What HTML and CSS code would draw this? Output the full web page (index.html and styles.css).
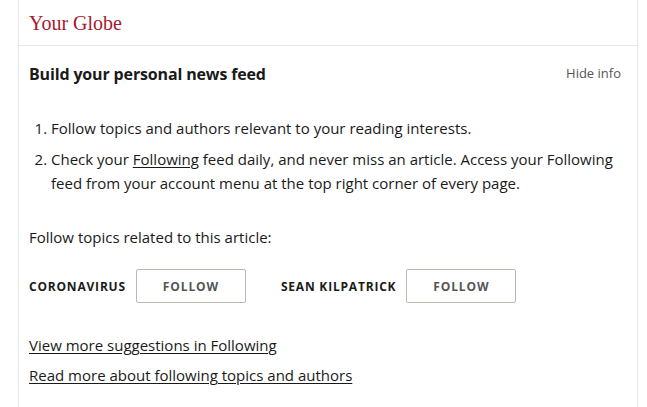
FILE: index.html
```html
<!DOCTYPE html>
<html>
<head>
<meta charset="utf-8">
<link rel="stylesheet" href="styles.css">
</head>
<body>
<div class="card">
  <div class="card-head">
    <h2 class="brand">Your Globe</h2>
  </div>
  <div class="card-body">
    <div class="title-row">
      <h3 class="title">Build your personal news feed</h3>
      <a class="hide">Hide info</a>
    </div>
    <ol class="steps">
      <li>Follow topics and authors relevant to your reading interests.</li>
      <li><span>Check your </span><a class="ul">Following</a><span> feed daily, and never miss an article. Access your Following</span><br><span>feed from your account menu at the top right corner of every page.</span></li>
    </ol>
    <p class="related">Follow topics related to this article:</p>
    <div class="topics">
      <div class="topic"><span class="topic-name">CORONAVIRUS</span><button class="follow">FOLLOW</button></div>
      <div class="topic"><span class="topic-name">SEAN KILPATRICK</span><button class="follow">FOLLOW</button></div>
    </div>
    <div class="links">
      <a class="ul">View more suggestions in Following</a>
      <a class="ul">Read more about following topics and authors</a>
    </div>
  </div>
</div>
</body>
</html>
```
FILE: styles.css
```css
* { box-sizing: border-box; }
html, body { margin: 0; padding: 0; background: #fff; }
body { padding: 0 9px 0 18px; font-family: "Open Sans", "Noto Sans", sans-serif; color: #1a1a1a; }
.card {
  width: 620px;
  border-left: 1px solid #e6e6e6;
  border-right: 1px solid #e6e6e6;
  height: 407px;
}
.card-head {
  height: 46px;
  border-bottom: 1px solid #e6e6e6;
  padding: 9px 10px 0 10px;
}
.brand {
  margin: 0;
  font-family: "Liberation Serif", serif;
  font-weight: normal;
  font-size: 20px;
  line-height: 28px;
  color: #a6192e;
}
.card-body { padding: 15px 16px 0 10px; }
.title-row { display: flex; justify-content: space-between; align-items: center; height: 26px; }
.title { margin: 0; font-size: 16px; font-weight: 700; line-height: 26px; color: #1a1a1a; letter-spacing: -0.15px; }
.hide { font-size: 13px; color: #555; line-height: 24px; margin-top: -2px; }
.steps { margin: 29px 0 0 0; padding: 0 0 0 22px; font-size: 15px; line-height: 24px; }
.steps li { margin-bottom: 7px; }
.steps li:last-child { margin-bottom: 0; }
.ul { color: #1a1a1a; text-decoration: underline; text-underline-offset: 2px; }
.related { margin: 30px 0 0 0; font-size: 15px; line-height: 24px; }
.topics { display: flex; gap: 35px; margin-top: 20px; }
.topic { display: flex; align-items: center; gap: 10px; }
.topic-name { font-size: 12px; font-weight: 700; letter-spacing: 0.8px; color: #1a1a1a; }
.follow {
  width: 110px; height: 34px;
  background: #fff;
  border: 1px solid #bdbab4;
  border-radius: 2px;
  font-family: inherit;
  font-size: 12px; font-weight: 700; letter-spacing: 0.9px;
  color: #555;
}
.links { display: flex; flex-direction: column; gap: 6px; margin-top: 30px; font-size: 15px; line-height: 24px; }
```
